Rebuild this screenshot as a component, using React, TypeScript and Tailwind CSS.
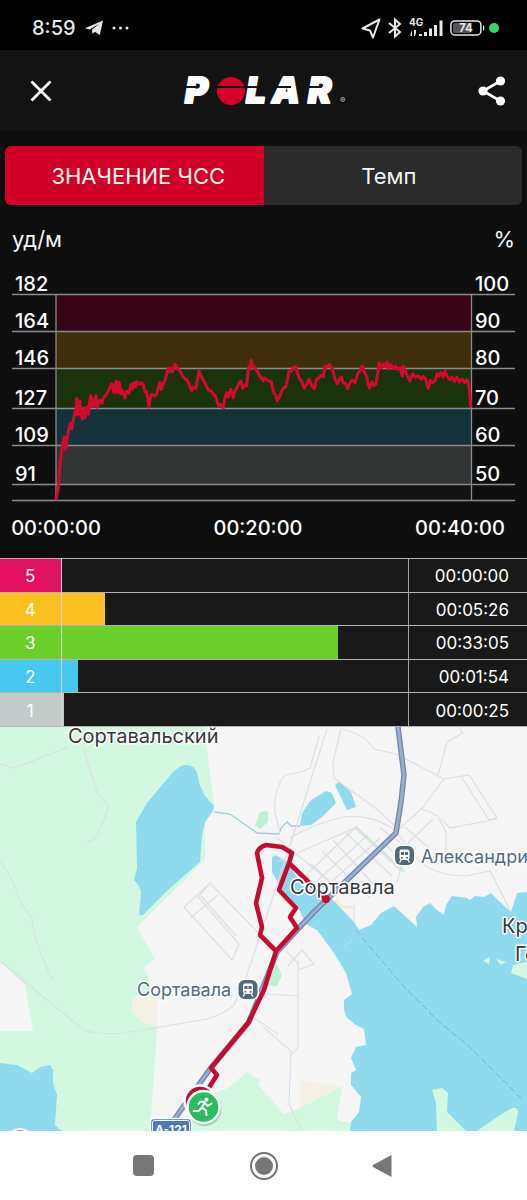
import React from "react";

const zones = [
  { id: 5, color: "bg-[#e0115f]", bar: 0, time: "00:00:00" },
  { id: 4, color: "bg-[#fabf20]", bar: 12.7, time: "00:05:26" },
  { id: 3, color: "bg-[#6bce2b]", bar: 79.8, time: "00:33:05" },
  { id: 2, color: "bg-[#48c7ef]", bar: 4.7, time: "00:01:54" },
  { id: 1, color: "bg-[#c4cbcb]", bar: 0.7, time: "00:00:25" },
];

const gridRows = [
  { y: 29, bpm: "182", pct: "100", fill: "#370416" },
  { y: 66, bpm: "164", pct: "90", fill: "#3e2e0b" },
  { y: 103, bpm: "146", pct: "80", fill: "#1b330d" },
  { y: 143, bpm: "127", pct: "70", fill: "#14323c" },
  { y: 180, bpm: "109", pct: "60", fill: "#323333" },
  { y: 219, bpm: "91", pct: "50", fill: "#121212" },
];

// Heart-rate samples, stored in thirds of a chart unit.
const samples: [number, number][] = [
  [168, 706], [175, 670], [180, 600], [187, 540], [193, 515], [197, 552], [201, 525], [205, 500], [209, 480], [212, 475],
  [215, 492], [220, 465], [225, 440], [227, 450], [230, 400], [235, 450], [240, 408], [243, 445], [247, 462], [252, 430],
  [255, 458], [262, 425], [265, 447], [269, 410], [272, 392], [275, 425], [278, 402], [283, 422], [288, 392], [292, 427],
  [300, 405], [306, 415], [310, 400], [318, 390], [325, 378], [335, 356], [342, 383], [348, 348], [352, 383], [358, 352],
  [362, 387], [366, 375], [375, 399], [379, 380], [383, 378], [387, 385], [393, 358], [397, 373], [403, 353], [407, 366],
  [410, 350], [418, 358], [424, 353], [430, 358], [435, 380], [440, 380], [447, 426], [451, 400], [455, 388], [464, 393],
  [470, 385], [480, 352], [484, 374], [489, 358], [495, 345], [505, 310], [510, 321], [514, 310], [518, 320], [525, 298],
  [532, 310], [540, 318], [548, 334], [556, 342], [563, 348], [569, 363], [575, 377], [581, 366], [588, 370], [592, 345],
  [597, 318], [603, 333], [610, 345], [616, 356], [625, 375], [633, 377], [640, 387], [647, 395], [655, 422], [662, 418],
  [670, 429], [674, 402], [680, 383], [685, 397], [692, 373], [700, 398], [704, 378], [710, 370], [715, 358], [722, 348],
  [728, 369], [734, 361], [740, 362], [743, 330], [746, 305], [750, 313], [753, 286], [760, 306], [766, 310], [775, 325],
  [783, 338], [790, 348], [792, 339], [798, 343], [807, 348], [814, 350], [818, 370], [822, 386], [827, 389], [832, 408],
  [840, 393], [845, 378], [851, 368], [857, 366], [862, 345], [867, 318], [874, 319], [880, 308], [887, 305], [892, 322],
  [897, 338], [905, 350], [913, 370], [920, 357], [927, 343], [934, 361], [943, 371], [949, 344], [957, 338], [963, 331],
  [970, 335], [975, 303], [982, 306], [988, 298], [998, 313], [1004, 340], [1012, 356], [1017, 345], [1024, 336], [1030, 353],
  [1036, 354], [1043, 371], [1050, 354], [1056, 345], [1065, 353], [1073, 326], [1080, 318], [1087, 303], [1094, 323], [1100, 335],
  [1104, 357], [1109, 370], [1116, 351], [1121, 362], [1128, 357], [1133, 324], [1138, 294], [1145, 308], [1151, 297], [1158, 306],
  [1161, 291], [1166, 311], [1172, 298], [1180, 311], [1187, 304], [1193, 313], [1201, 308], [1207, 333], [1210, 304], [1217, 321],
  [1222, 332], [1229, 348], [1238, 326], [1246, 337], [1255, 332], [1263, 342], [1270, 334], [1277, 343], [1281, 358], [1285, 370],
  [1291, 346], [1298, 353], [1306, 347], [1311, 326], [1317, 334], [1323, 322], [1330, 336], [1335, 318], [1342, 334], [1349, 344],
  [1356, 336], [1363, 350], [1370, 337], [1378, 351], [1386, 342], [1394, 353], [1401, 344], [1406, 358], [1409, 380], [1412, 427],
];
const heartRate = samples.map(([x, y]) => `${(x / 3).toFixed(1)},${(y / 3).toFixed(1)}`).join(" ");

function StatusBar() {
  return (
    <div className="flex h-[50px] items-center bg-black px-8 pt-1.5 text-gray-200">
      <span className="text-[20px] leading-6 font-medium">8:59</span>
      <svg className="ml-2 h-4 w-5" viewBox="0 0 20 16" fill="currentColor" aria-hidden="true">
        <path d="M1 8.2 19 .5 15.8 15 10.7 11.8 8.5 14 7.9 9.8 15 3.7 5.8 9.5Z" />
      </svg>
      <svg className="ml-2 h-4 w-[18px]" viewBox="0 0 18 16" fill="currentColor" aria-hidden="true">
        <circle cx="2" cy="8" r="1.5" /><circle cx="8.5" cy="8" r="1.5" /><circle cx="15" cy="8" r="1.5" />
      </svg>
      <div className="-mr-1 ml-auto flex items-center">
        <svg className="h-[22px] w-[22px]" viewBox="0 0 22 22" fill="none" stroke="currentColor" strokeWidth="2" strokeLinejoin="round" aria-hidden="true">
          <path d="M18.500 2.500 1.500 11.500l7.500 2 3 7Z" />
        </svg>
        <svg className="ml-1 h-[22px] w-4" viewBox="0 0 16 22" fill="none" stroke="currentColor" strokeWidth="2" aria-hidden="true">
          <path d="m2 6 11 9-5 4.500v-17L13 7 2 16" />
        </svg>
        <svg className="ml-1.5 h-[22px] w-9" viewBox="0 0 36 22" fill="currentColor" aria-hidden="true">
          <text x="0" y="9" fontSize="10" fontWeight="700">4G</text>
          <path d="M1.500 17 3 13v6H1.500zM5 13h2v3l-1 3H5zM10 17h3v2h-3zM15 15h3v4h-3zM20 11.500h3V19h-3zM25 8h3v11h-3zM30.500 3.500h3V19h-3z" />
        </svg>
        <svg className="ml-1 h-[18px] w-9" viewBox="0 0 36 18" aria-hidden="true">
          <rect x="1.900" y="1.900" width="30" height="14" rx="4" fill="none" stroke="currentColor" strokeWidth="1.500" />
          <rect x="4" y="4" width="18" height="10" rx="1.500" fill="#555" />
          <path d="M34 6.500h1.200v5H34z" fill="currentColor" />
          <text x="17" y="13" fontSize="11.500" fontWeight="700" textAnchor="middle" fill="currentColor">74</text>
        </svg>
        <span className="ml-1 size-2.5 rounded-full bg-[#3ed567]" />
      </div>
    </div>
  );
}

function Logo() {
  return (
    <svg className="h-15 w-[174px]" viewBox="176 61 174 60" role="img" aria-label="Polar">
      <g fill="#fff" stroke="#fff" strokeWidth="2" strokeLinejoin="round" fontFamily="Inter" fontWeight="900" fontStyle="italic" fontSize="35">
        <text x="184" y="103">P</text>
        <text x="245" y="103">L</text>
        <text x="271" y="103">A</text>
        <text x="307" y="103">R</text>
      </g>
      <circle cx="230" cy="91" r="14" fill="#d50028" />
      <path d="M182 87h13M215 87h45M275 87h15M305 87h13" stroke="#131313" strokeWidth="2" />
      <text x="339" y="103" fontSize="8" fill="#ccc">®</text>
    </svg>
  );
}

function Header() {
  return (
    <header className="grid h-[81px] grid-cols-[1fr_auto_1fr] items-center bg-[#131313] text-white">
      <button aria-label="Закрыть" className="ml-[29px] size-6 justify-self-start">
        <svg viewBox="0 0 24 24" fill="none" stroke="currentColor" strokeWidth="2.800"><path d="m2.500 2.500 19 19m0-19-19 19" /></svg>
      </button>
      <Logo />
      <button aria-label="Поделиться" className="mr-[21px] h-[30px] w-7 justify-self-end">
        <svg viewBox="0 0 28 30" fill="currentColor">
          <path d="M22.500 5 5 15l17.500 10" fill="none" stroke="currentColor" strokeWidth="2.600" />
          <circle cx="22.500" cy="5" r="4.600" /><circle cx="5" cy="15" r="4.600" /><circle cx="22.500" cy="25" r="4.600" />
        </svg>
      </button>
    </header>
  );
}

function Chart() {
  return (
    <svg className="block h-auto w-full" viewBox="0 0 527 293" role="img" aria-label="ЧСС">
      {gridRows.map((row, i) => (
        <rect key={row.y} x="56" y={row.y} width="415" height={(gridRows[i + 1]?.y ?? 236) - row.y} fill={row.fill} />
      ))}
      <path d={gridRows.map((r) => `M12 ${r.y + 0.5}H515`).join("") + "M12 235.500H515M56 29V236M471.500 29V236"} stroke="#8b8b8b" strokeWidth="1.300" fill="none" />
      <polyline points={heartRate} fill="none" stroke="#d10a2e" strokeWidth="3" strokeLinejoin="round" />
      <g fill="#fff" fontSize="20" fontWeight="500">
        {gridRows.map((r) => (
          <g key={r.y}>
            <text x="15" y={r.y - 3}>{r.bpm}</text>
            <text x="475" y={r.y - 3}>{r.pct}</text>
          </g>
        ))}
        <text x="56" y="270" textAnchor="middle">00:00:00</text>
        <text x="258" y="270" textAnchor="middle">00:20:00</text>
        <text x="460" y="270" textAnchor="middle">00:40:00</text>
      </g>
    </svg>
  );
}

function ZoneTable() {
  return (
    <table className="h-[169px] w-full table-fixed border-collapse bg-[#191919] text-white" aria-label="Зоны">
      <colgroup><col className="w-[61px]" /><col /><col className="w-[119px]" /></colgroup>
      <tbody>
        {zones.map((z) => (
          <tr key={z.id} className="border-y border-[#b5b5b5]">
            <th scope="row" className={`${z.color} border-r border-[#d5d5d5] px-0 pt-0.5 pb-0 text-[17px] leading-5 font-normal`}>{z.id}</th>
            <td className="h-px p-0"><div className={`${z.color} h-full`} style={{ width: `${z.bar}%` }} /></td>
            <td className="border-l border-[#a5a5a5] pt-0.5 pr-[18px] pb-0 pl-0 text-right text-[17px] leading-5">{z.time}</td>
          </tr>
        ))}
      </tbody>
    </table>
  );
}

function Station({ x, y }: { x: number; y: number }) {
  return (
    <g transform={`translate(${x} ${y})`}>
      <rect x="-11" y="-11" width="22" height="22" rx="7" fill="#fff" />
      <rect x="-9.500" y="-9.500" width="19" height="19" rx="6" fill="#526b7c" />
      <rect x="-5" y="-6" width="10" height="10.500" rx="2" fill="#fff" />
      <path d="M-3.500-3.500h3v3h-3zM.5-3.500h3v3h-3zM-3.500 1.500h1.800V3h-1.800zM1.700 1.500h1.800V3H1.700z" fill="#526b7c" />
      <path d="m-3 4-2 3M3 4l2 3" stroke="#fff" strokeWidth="1.300" />
    </g>
  );
}

function RouteMap() {
  return (
    <svg className="block h-auto w-full bg-[#f5f5f5]" viewBox="0 727 527 404" role="img" aria-label="Карта маршрута">
      <path fill="#d3f8e2" d="M0 727H205L207 748 214 805 205 822V860L137 927 155 959 143 968 148 977 157 1008V1030L150 1131H0V1031H33L25 985 0 961Z" />
      <path fill="#d3f8e2" d="M185 1131 213 1094 228 1088 247 1072 260 1080 258 1085 284 1114 300 1108 342 1086 337 1120 350 1123V1131Z" />
      <path fill="#c0f0d4" d="M255 825 260 812 268 811V822L260 829ZM276 963 282 975 277 986H267Z" />
      <path fill="#f5f0e5" d="M132 997V1012L143 1023 157 1027V1002L148 995ZM300 1080 342 1086 300 1108Z" />
      <g fill="#90daee">
        <path d="M185 765Q193 764 197 772L199 783 205 796 214 806 213 811 205 822 202 835 200 862 170 888 143 915H139L141 892Q140 886 134 880L137 868 136 822 147 803 173 772Q179 766 185 765Z" />
        <path d="M300 826 302 813 311 800 326 791 332 793 336 803 322 817 311 825ZM335 785 339 782 351 792 356 807 347 810Z" />
        <path d="M0 1063 17 1065 32 1073 40 1067 50 1065 53 1070V1083L57 1095 55 1125 62 1131H0Z" />
        <path d="M272 857 276 855 289 863 301 885 331 898 354 922 359 930 371 925 381 913 394 906 417 927 416 917 423 907 430 903 437 910 444 915 446 905 452 896 467 898 470 900 475 896 484 897 491 893 500 902 511 912 517 893 527 892V1131H350L351 1122 359 1112 361 1097 351 1085V1073L356 1070 351 1058 356 1047 366 1045 364 1029 356 1025 347 1018 344 1010V1000L352 994 346 973 334 953 317 930 306 924 300 911 286 897 272 872Z" />
      </g>
      <path fill="#d3f8e2" d="M432 1090 442 1088 448 1093 447 1112 466 1131H437L436 1103ZM477 1131 497 1117 512 1108Q518 1107 518 1113L514 1131ZM483 961 490 957 489 964ZM496 959 506 962 501 965ZM511 973 513 965 527 962V979Z" />
      <path d="M214 812 230 814 257 833 279 834 281 828 287 822 291 826 300 826" fill="none" stroke="#9bcfe0" strokeWidth="1.300" />
      <path d="M356 930 404 987 437 1020 471 1048 524 1101" fill="none" stroke="#63bbd3" strokeWidth="1" strokeDasharray="7 3" />
      <path d="M334 953 356 938" stroke="#b9e7f2" strokeWidth="1" strokeDasharray="2 2" />
      <g fill="none" stroke="#dddfe3" strokeWidth="1.200">
        <path d="M0 764 14 768 38 759 68 747M84 749 97 793 109 806 99 832Q96 841 87 842M0 862Q13 876 20 902L32 918Q34 942 53 981M0 961 48 1001 84 1030Q106 1037 137 1031L207 1019Q230 1012 235 1003" />
        <path d="M327 729 314 770 295 830 262 930 246 977 235 1003M319 736 310 768Q301 773 285 775 273 790 275 812L280 834M341 729 333 762 334 778 356 794 378 810 395 826M290 838Q315 823 344 817 370 814 392 828 402 838 411 852 428 876 466 876L490 871 511 912" />
        <path d="M342 729Q365 734 374 749L396 754 444 779 469 775 497 818 489 820 461 776M438 775 447 742 463 733 459 727M444 779 422 808 396 832M421 809Q436 812 450 828L497 819M439 819 446 832V850" />
        <path d="M279 861 355 828 402 872M309 872 357 826M318 880 368 835M328 885 380 838M346 833 392 876M333 840 378 889M322 851 370 898M311 864 340 891M380 828 405 846 433 819M386 845 403 861 397 882M405 827 430 849" />
        <path d="M184 907 210 883 263 938M184 907 232 960 239 944 198 897 210 883M190 918 218 895M201 896 236 936M287 952 298 963V1048Q292 1056 290 1050L264 1028M298 970 314 964 302 950 288 966M264 994 298 996M291 1052 289 1104 302 1131M354 922V905M277 838 330 882M254 1018 278 1034" />
      </g>
      <path d="M356 827 405 872" fill="none" stroke="#cde9dc" strokeWidth="2" />
      <path d="M335 900 342 907H354" fill="none" stroke="#f5ead4" strokeWidth="3" />
      <path d="M398 727 404 775 401 802 396 833 347 880 314 912 297 930 277 952 249 1022 210 1069 166 1131" fill="none" stroke="#7185ad" strokeWidth="5.500" strokeLinejoin="round" />
      <path d="M398 727 404 775 401 802 396 833 347 880 314 912 297 930 277 952 249 1022 210 1069 166 1131" fill="none" stroke="#9daccd" strokeWidth="3" strokeLinejoin="round" />
      <path d="M326 899 289 863 279 890 296 908 290 917 297 928 276 951 260 935 262 927 256 903 262 878 257 853Q259 847 266 845L282 847 292 853 289 863M276 951 264 990 248 1023 211 1068 217 1075 208 1089" fill="none" stroke="#c60b32" strokeWidth="4.600" strokeLinejoin="round" />
      <circle cx="326" cy="899" r="4" fill="#c60b32" />
      <Station x={404.5} y={855.5} />
      <Station x={248} y={989.5} />
      <g fontSize="20" fill="#35393c" stroke="#fff" strokeWidth="3" strokeLinejoin="round" paintOrder="stroke">
        <text x="68" y="743">Сортавальский</text>
        <text x="290" y="894">Сортавала</text>
        <text x="502" y="933">Кр</text>
        <text x="515" y="961">Ге</text>
        <text x="421" y="863" fontSize="18" fill="#526b7c">Александрия</text>
        <text x="137" y="996" fontSize="18" fill="#526b7c">Сортавала</text>
      </g>
      <rect x="150.500" y="1118.500" width="41" height="22" rx="3" fill="#4878bd" stroke="#fff" strokeWidth="1.500" />
      <rect x="152.500" y="1120.500" width="37" height="18" rx="2" fill="none" stroke="#fff" strokeWidth="1" />
      <text x="171" y="1134" textAnchor="middle" fontSize="12" fontWeight="700" fill="#fff">A-121</text>
      <circle cx="20" cy="1141" r="13" fill="#fff" /><circle cx="20" cy="1141" r="11" fill="#8795a0" />
      <circle cx="200" cy="1101" r="15.500" fill="#c60b32" stroke="#fff" strokeWidth="2.500" />
      <circle cx="204.500" cy="1109" r="17" fill="#566c60" opacity=".35" />
      <circle cx="203.500" cy="1107" r="16" fill="#2cba62" stroke="#fff" strokeWidth="2.500" />
      <circle cx="206.500" cy="1099.500" r="2" fill="#fff" />
      <path d="m198.500 1104 2-2.500 4 .5 3 4 4-2.500m-7-1-2.500 5 4 3 .5 4.500m-5-7-3 3h-5" fill="none" stroke="#fff" strokeWidth="2" strokeLinecap="round" strokeLinejoin="round" />
    </svg>
  );
}

function NavBar() {
  return (
    <nav className="grid h-[69px] grid-cols-[143px_1fr_143px] items-center bg-white text-[#777]">
      <button aria-label="Недавние" className="-mr-[11px] size-[21px] justify-self-end rounded bg-[#777]" />
      <button aria-label="Домой" className="size-7 justify-self-center">
        <svg viewBox="0 0 28 28"><circle cx="14" cy="14" r="13" fill="none" stroke="currentColor" strokeWidth="2" /><circle cx="14" cy="14" r="9" fill="currentColor" /></svg>
      </button>
      <button aria-label="Назад" className="-ml-3 h-6 w-5 justify-self-start">
        <svg viewBox="0 0 20 24"><path d="M19.500 1v22L1 13Q0 12 1 11Z" fill="currentColor" /></svg>
      </button>
    </nav>
  );
}

export default function App() {
  return (
    <div className="min-h-screen overflow-hidden bg-[#0e0e0e] font-['Inter',sans-serif]">
      <StatusBar />
      <Header />
      <main>
        <div className="mx-[5px] mt-[15px] flex h-[59px] overflow-hidden rounded-md text-[22px] leading-7 text-gray-100">
          <button className="flex-1 bg-[#d10026] pl-2" aria-pressed="true">ЗНАЧЕНИЕ ЧСС</button>
          <button className="flex-1 bg-[#2b2b2b] pr-2" aria-pressed="false">Темп</button>
        </div>
        <div className="flex h-[60px] items-center justify-between px-3 pt-2 text-[22px] leading-7 text-gray-100">
          <span>уд/м</span>
          <span>%</span>
        </div>
        <Chart />
        <ZoneTable />
        <RouteMap />
      </main>
      <NavBar />
    </div>
  );
}
